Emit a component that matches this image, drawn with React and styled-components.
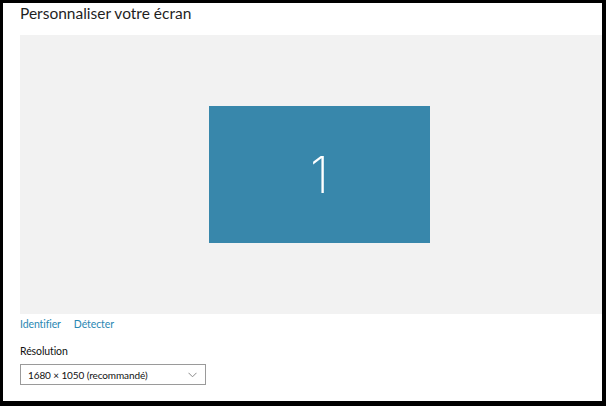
import React from "react"
import styled, { createGlobalStyle } from "styled-components"

const Global = createGlobalStyle`
  html, body {
    margin: 0;
    padding: 0;
    background: #000;
  }
  body {
    font-family: "Lato", "Open Sans", sans-serif;
  }
`

const Frame = styled.div`
  box-sizing: border-box;
  width: 606px;
  height: 406px;
  border-style: solid;
  border-color: #000;
  border-width: 3px 4px 5px 3px;
  background: #fff;
  display: flex;
  flex-direction: column;
  padding-left: 17px;
  overflow: hidden;
`

const Title = styled.h1`
  box-sizing: border-box;
  margin: 0;
  height: 32px;
  padding-top: 1px;
  font-size: 15.5px;
  line-height: 19px;
  font-weight: 400;
  color: #1f1f1f;
`

const Canvas = styled.div`
  height: 279px;
  background: #f2f2f2;
  display: flex;
  align-items: center;
  justify-content: center;
  padding-left: 17px;
`

const Monitor = styled.div`
  width: 221px;
  height: 137px;
  background: #3887ab;
  display: flex;
  align-items: center;
  justify-content: center;
  color: #fff;
  font-family: "Inter", "Open Sans", sans-serif;
  font-weight: 200;
  font-size: 50px;
`

const Links = styled.div`
  display: flex;
  gap: 13px;
  margin-top: 3px;
  height: 14px;
  align-items: center;
`

const LinkText = styled.a`
  font-size: 10.5px;
  letter-spacing: -0.1px;
  color: #2b88b3;
  text-decoration: none;
  cursor: pointer;
`

const Label = styled.div`
  margin-top: 13px;
  font-size: 10.5px;
  letter-spacing: -0.1px;
  color: #111;
  height: 14px;
  display: flex;
  align-items: center;
`

const Select = styled.div`
  box-sizing: border-box;
  margin-top: 6px;
  width: 186px;
  height: 21px;
  border: 1px solid #9a9a9a;
  display: flex;
  align-items: center;
  justify-content: space-between;
  padding: 0 8px 0 7px;
  font-size: 10px;
  letter-spacing: -0.1px;
  color: #111;
`

const Chevron = () => (
  <svg width="9" height="6" viewBox="0 0 9 6">
    <path d="M0.5 0.8 L4.5 4.8 L8.5 0.8" fill="none" stroke="#8a8a8a" strokeWidth="1" />
  </svg>
)

export default function App() {
  return (
    <>
      <Global />
      <Frame>
        <Title>Personnaliser votre écran</Title>
        <Canvas>
          <Monitor>1</Monitor>
        </Canvas>
        <Links>
          <LinkText>Identifier</LinkText>
          <LinkText>Détecter</LinkText>
        </Links>
        <Label>Résolution</Label>
        <Select>
          <span>1680 × 1050 (recommandé)</span>
          <Chevron />
        </Select>
      </Frame>
    </>
  )
}
